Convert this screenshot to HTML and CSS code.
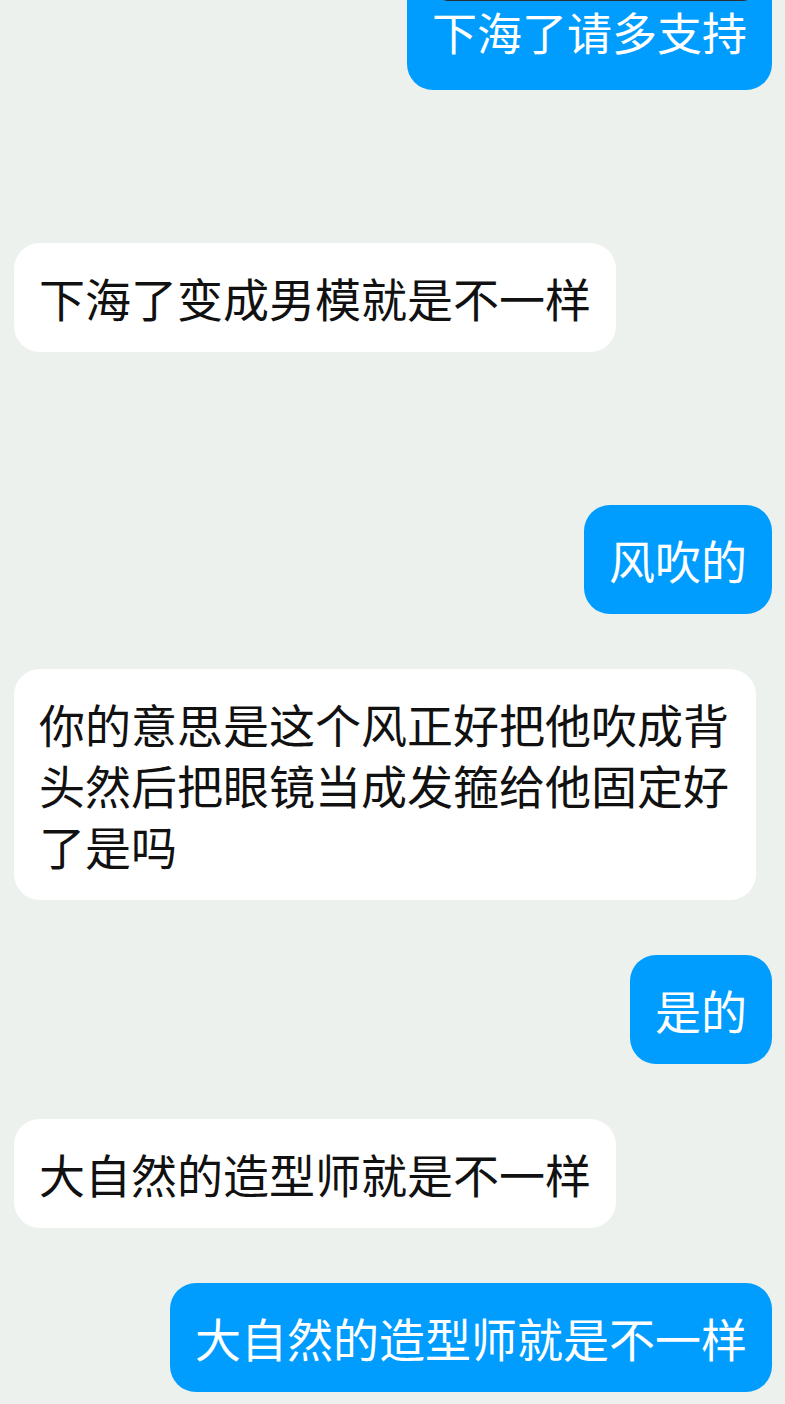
FILE: index.html
```html
<!DOCTYPE html>
<html lang="zh-CN">
<head>
  <meta charset="UTF-8" />
  <meta name="viewport" content="width=device-width, initial-scale=1.0"/>
  <title>聊天</title>
  <link rel="stylesheet" href="styles.css">
</head>
<body>

  <div class="chat">

    <!-- first message, scrolled partly out of view -->
    <div class="msg me first">
      <div class="quote"></div>
      <div class="text">下海了请多支持</div>
    </div>

    <div class="msg other far">下海了变成男模就是不一样</div>

    <div class="msg me far">风吹的</div>

    <div class="msg other">你的意思是这个风正好把他吹成背头然后把眼镜当成发箍给他固定好了是吗</div>

    <div class="msg me">是的</div>

    <div class="msg other">大自然的造型师就是不一样</div>

    <div class="msg me">大自然的造型师就是不一样</div>

  </div>

</body>
</html>
```

FILE: styles.css
```css
html, body {
  height: 100%;
}
body {
  background-color: #edf1ee;
  font-family: "Noto Sans CJK SC", "Noto Sans", sans-serif;
  margin: 0;
  padding: 0;
  overflow: hidden;
}
.chat {
  display: flex;
  flex-direction: column;
  padding: 0 13px 0 14px;
}
.msg {
  max-width: 742px;
  box-sizing: border-box;
  padding: 24px 25px;
  border-radius: 26px;
  font-size: 46px;
  line-height: 61px;
  margin-top: 55px;
  word-break: break-all;
}
.msg.far {
  margin-top: 153px;
}
.msg.me {
  align-self: flex-end;
  background-color: #009dff;
  color: white;
}
.msg.other {
  align-self: flex-start;
  background-color: white;
  color: #111;
}
.msg.first {
  margin-top: -123px;
  padding-bottom: 28px;
  font-size: 45px;
}
.quote {
  height: 100px;
  margin: 0 -6px 0 6px;
  background-color: #2a2d31;
  border-radius: 10px;
}
```
